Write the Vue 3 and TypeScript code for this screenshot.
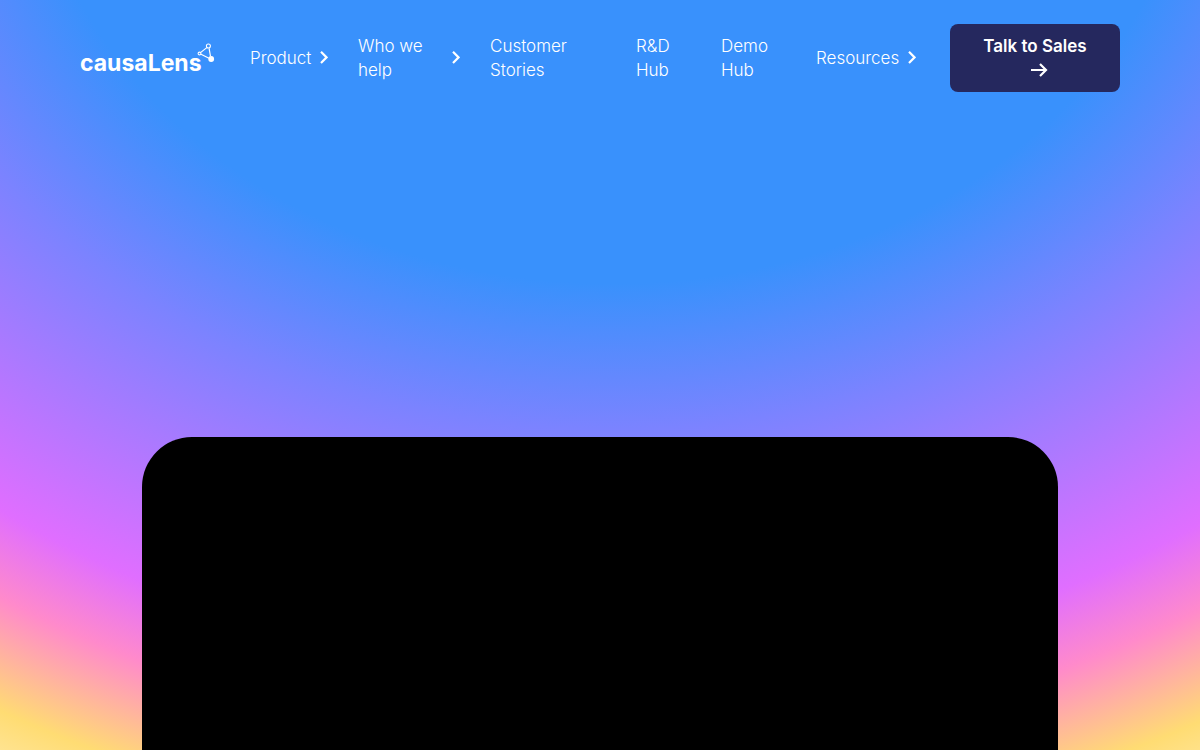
<script setup lang="ts">
interface NavItem {
  label: string
  menu: boolean
}

const items: NavItem[] = [
  { label: 'Product', menu: true },
  { label: 'Who we help', menu: true },
  { label: 'Customer Stories', menu: false },
  { label: 'R&D Hub', menu: false },
  { label: 'Demo Hub', menu: false },
  { label: 'Resources', menu: true },
]
</script>

<template>
  <div class="page">
    <header class="header">
      <a class="logo" href="#" aria-label="causaLens">
        <span class="wordmark">causaLens</span>
        <svg class="mark" viewBox="0 0 18 20" width="18" height="20" fill="none" stroke="#fff" aria-hidden="true">
          <path d="M9.8 4.6 3.8 9.4M4 11.3l8 4M12.1 5.4l1.4 8" stroke-width="1.2" />
          <circle cx="11.4" cy="3" r="2" stroke-width="1.1" />
          <circle cx="2.5" cy="10.5" r="1.4" stroke-width="1.1" />
          <circle cx="14.2" cy="16" r="2.9" fill="#fff" stroke="none" />
        </svg>
      </a>
      <nav class="nav" aria-label="Main">
        <template v-for="item in items" :key="item.label">
          <button v-if="item.menu" class="item" type="button">
            <span>{{ item.label }}</span>
            <svg class="chevron" viewBox="0 0 8 14" width="8" height="14" fill="none" stroke="#fff" stroke-width="2.2" aria-hidden="true">
              <path d="M1 .8 6.6 6.4 1 12" />
            </svg>
          </button>
          <a v-else class="item" href="#">{{ item.label }}</a>
        </template>
      </nav>
      <a class="cta" href="#">
        <span>Talk to Sales</span>
        <svg class="arrow" viewBox="0 0 18 14" width="18" height="14" fill="none" stroke="#fff" stroke-width="2.2" aria-hidden="true">
          <path d="M1 7h15M10 1l6 6-6 6" />
        </svg>
      </a>
    </header>
    <main class="stage">
      <div class="video"></div>
    </main>
  </div>
</template>

<style>
body {
  margin: 0;
}
</style>

<style scoped>
.page {
  box-sizing: border-box;
  height: 100vh;
  overflow: hidden;
  display: flex;
  flex-direction: column;
  color: #fff;
  font-family: Inter, "Liberation Sans", sans-serif;
  background: radial-gradient(
    122% 162% at 51% -27%,
    #3991fc 40%,
    #7b83ff 52%,
    #e06eff 72%,
    #ff8acb 78%,
    #ffdc73 86%,
    #fff 100%
  );
}

.header {
  display: flex;
  align-items: center;
  padding: 24px 80px 0;
}

.logo {
  flex: 0 0 134px;
  min-width: 0;
  display: flex;
  align-items: flex-start;
  padding-top: 6px;
  color: #fff;
  text-decoration: none;
}

.wordmark {
  padding-top: 4px;
  font-size: 23px;
  line-height: 32px;
  font-weight: 700;
}

.mark {
  flex: none;
  margin-left: -5px;
}

.nav {
  flex: 1;
  display: grid;
  grid-template-columns: 78fr 102fr 116fr 55fr 65fr 100fr;
  column-gap: 30px;
  align-items: center;
  margin: 0 34px 0 36px;
}

.item {
  display: flex;
  align-items: center;
  justify-content: space-between;
  padding: 0;
  border: 0;
  background: none;
  color: #fff;
  font-family: inherit;
  font-size: 17px;
  font-weight: 300;
  line-height: 24px;
  text-align: left;
  text-decoration: none;
  cursor: pointer;
}

.chevron {
  flex: none;
}

.cta {
  flex: 0 0 170px;
  box-sizing: border-box;
  padding: 10px 32px;
  border-radius: 8px;
  background: #25285e;
  color: #fff;
  font-size: 17px;
  font-weight: 600;
  line-height: 24px;
  text-align: center;
  text-decoration: none;
}

.arrow {
  margin-left: 8px;
  vertical-align: -1px;
}

.stage {
  flex: 1;
  display: flex;
  justify-content: center;
  padding-top: 345px;
}

.video {
  width: calc(100% - 284px);
  border-radius: 50px 50px 0 0;
  background: #000;
}
</style>
